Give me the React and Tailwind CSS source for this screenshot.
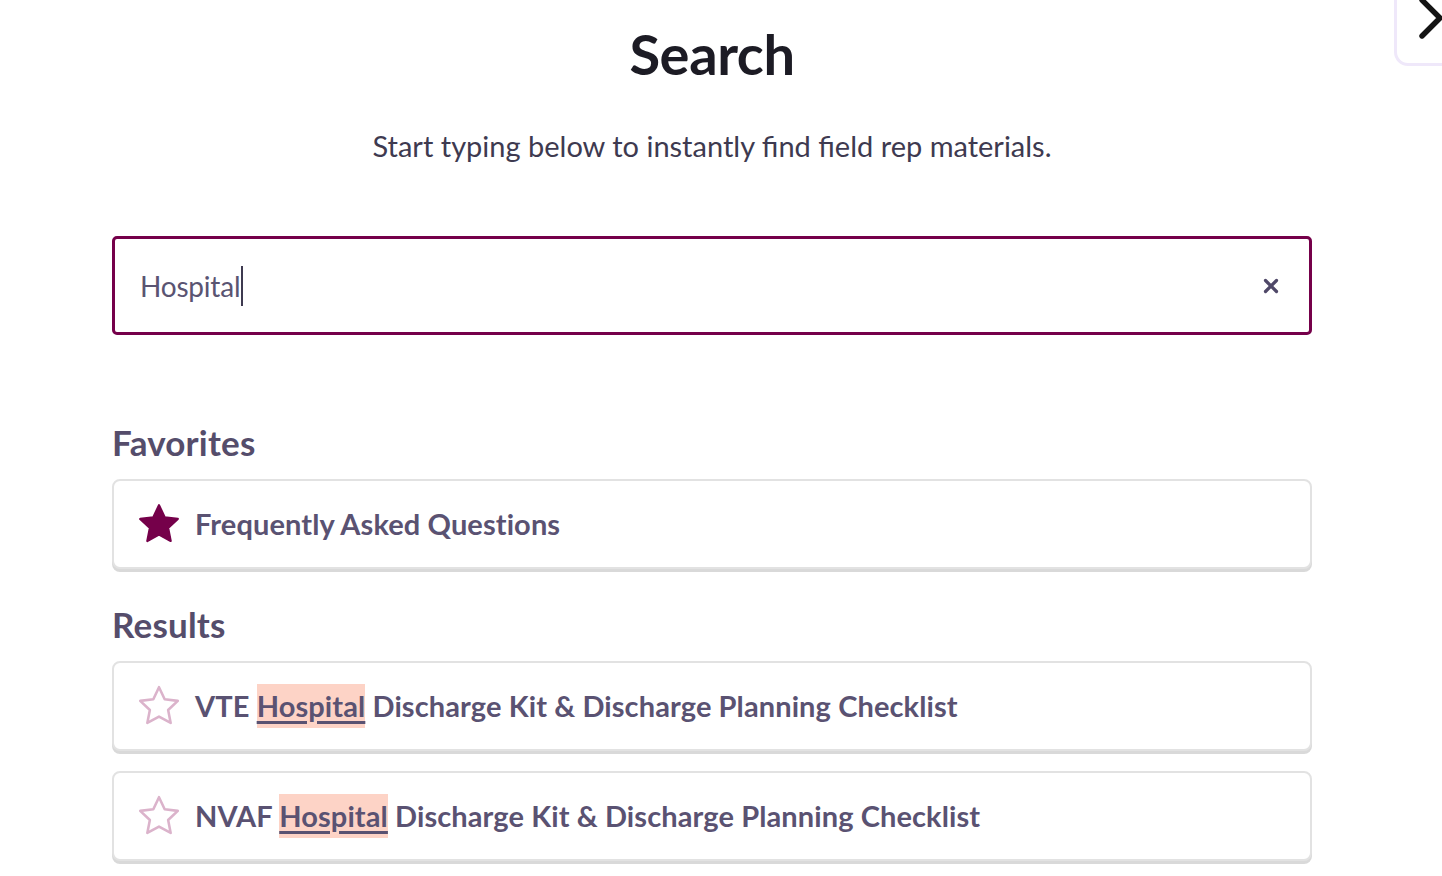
import React from 'react';
import { X, ChevronRight } from 'lucide-react';

const StarFilled = () => (
  <svg width="44" height="42" viewBox="0 0 24 23" className="shrink-0">
    <path
      d="M12 1.2l3.1 6.6 7.2.9-5.3 5 1.4 7.1L12 17.3l-6.4 3.5L7 13.7l-5.3-5 7.2-.9z"
      fill="#75004a"
      stroke="#75004a"
      strokeWidth="1.2"
      strokeLinejoin="round"
    />
  </svg>
);

const StarOutline = () => (
  <svg width="44" height="42" viewBox="0 0 24 23" className="shrink-0">
    <path
      d="M12 1.2l3.1 6.6 7.2.9-5.3 5 1.4 7.1L12 17.3l-6.4 3.5L7 13.7l-5.3-5 7.2-.9z"
      fill="none"
      stroke="#dbb3cb"
      strokeWidth="1.4"
      strokeLinejoin="round"
    />
  </svg>
);

const ResultCard = ({ favorite, prefix, match, suffix, title }) => (
  <div className="flex items-center gap-[14px] h-[90px] pl-[23px] pr-6 bg-white border-2 border-[#e2e2e2] rounded-[8px] shadow-[0_3px_0_#d9d9d9]">
    {favorite ? <StarFilled /> : <StarOutline />}
    <p className="text-[29px] leading-[44px] font-bold text-[#5a5272] tracking-[0.1px]">
      {title ? (
        title
      ) : (
        <>
          {prefix}{' '}
          <span className="inline-block h-[44px] leading-[44px] bg-[#fdd3c6] underline decoration-[3px] underline-offset-[4px]">
            {match}
          </span>{' '}
          {suffix}
        </>
      )}
    </p>
  </div>
);

export default function App() {
  return (
    <div className="relative min-h-[876px] bg-white font-['Lato','Noto_Sans',sans-serif] overflow-hidden">
      {/* side toggle */}
      <div className="absolute -top-4 left-[1394px] w-[80px] h-[82px] border-[3px] border-[#efe8fa] rounded-[14px]" />
      <ChevronRight
        size={72}
        strokeWidth={1.8}
        className="absolute left-[1395px] -top-[18px] text-[#141414]"
      />

      <div className="w-[1200px] ml-[112px] flex flex-col">
        <h1 className="mt-[22px] text-center text-[56px] leading-[64px] font-bold text-[#1c1b24] tracking-[-0.4px]">
          Search
        </h1>
        <p className="mt-[42px] text-center text-[29px] leading-[36px] text-[#3e3a50] tracking-[0px]">
          Start typing below to instantly find field rep materials.
        </p>

        <div className="mt-[72px] h-[99px] border-[3px] border-[#75004a] rounded-[5px] flex items-center pl-[25px] pr-[27px]">
          <div className="flex-1 flex items-center text-[28px] text-[#5a5472] tracking-[-0.2px]">
            Hospital
            <span className="w-[2px] h-[40px] bg-[#3e3a50] ml-[1px]" />
          </div>
          <X size={22} strokeWidth={3.5} className="text-[#4f4868]" />
        </div>

        <h2 className="mt-[87px] text-[35px] leading-[40px] font-bold text-[#554d6b] tracking-[0.2px]">
          Favorites
        </h2>
        <div className="mt-[17px]">
          <ResultCard favorite title="Frequently Asked Questions" />
        </div>

        <h2 className="mt-[35px] text-[35px] leading-[40px] font-bold text-[#554d6b] tracking-[0.2px]">
          Results
        </h2>
        <div className="mt-[17px] flex flex-col gap-[20px]">
          <ResultCard prefix="VTE" match="Hospital" suffix="Discharge Kit & Discharge Planning Checklist" />
          <ResultCard prefix="NVAF" match="Hospital" suffix="Discharge Kit & Discharge Planning Checklist" />
        </div>
      </div>
    </div>
  );
}
